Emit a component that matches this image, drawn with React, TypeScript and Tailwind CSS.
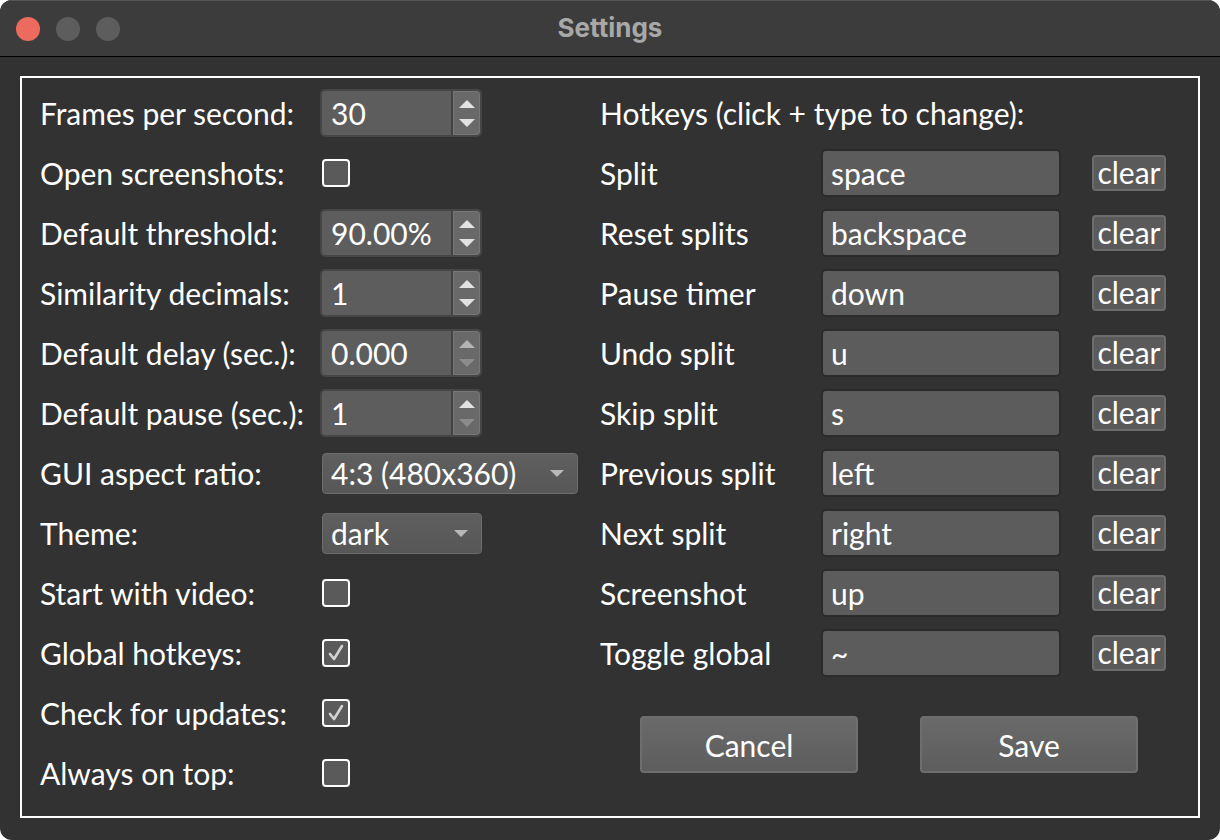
import React from 'react';

const font = "font-['Lato','Open_Sans',sans-serif]";

function Arrow({ up, dim }: { up?: boolean; dim?: 'mid' | 'low' }) {
  const color = dim === 'low' ? '#8c8c8c' : dim === 'mid' ? '#b4b4b4' : '#e2e2e2';
  return (
    <svg width="16" height="8" viewBox="0 0 16 8">
      {up ? <polygon points="8,0 16,8 0,8" fill={color} /> : <polygon points="0,0 16,0 8,8" fill={color} />}
    </svg>
  );
}

function SpinBox({ value, upDim, downDim }: { value: string; upDim?: 'mid' | 'low'; downDim?: 'mid' | 'low' }) {
  return (
    <div className="w-[162px] h-[48px] rounded-[5px] border-2 border-[#464646] bg-[#5d5d5d] flex">
      <div className="flex-1 flex items-center pl-[9px] text-white text-[30px] leading-none border-r-2 border-[#434343]">
        {value}
      </div>
      <div className="w-[27px] bg-[#696969] border border-[#767676] rounded-r-[4px] flex flex-col items-center justify-center gap-[11px]">
        <Arrow up dim={upDim} />
        <Arrow dim={downDim} />
      </div>
    </div>
  );
}

function CheckBox({ checked }: { checked?: boolean }) {
  return (
    <div className="ml-[2px] w-[28px] h-[28px] rounded-[4px] border-2 border-white bg-[#5a5a5a] flex items-center justify-center">
      {checked && (
        <svg width="20" height="20" viewBox="0 0 20 20">
          <polyline points="4,11 8,16 16,3" fill="none" stroke="#d2d2d2" strokeWidth="2.6" strokeLinecap="round" strokeLinejoin="round" />
        </svg>
      )}
    </div>
  );
}

function Combo({ value, width }: { value: string; width: string }) {
  return (
    <div className={`ml-[2px] ${width} h-[41px] rounded-[4px] border border-[#6c6c6c] bg-gradient-to-b from-[#5f5f5f] to-[#575757] flex items-center justify-between pl-[8px] pr-[13px] text-white text-[30px] leading-none`}>
      <span>{value}</span>
      <svg width="14" height="7" viewBox="0 0 14 7">
        <polygon points="0,0 14,0 7,7" fill="#b8b8b8" />
      </svg>
    </div>
  );
}

export default function App() {
  const left: { label: string; control: React.ReactNode }[] = [
    { label: 'Frames per second:', control: <SpinBox value="30" /> },
    { label: 'Open screenshots:', control: <CheckBox /> },
    { label: 'Default threshold:', control: <SpinBox value="90.00%" /> },
    { label: 'Similarity decimals:', control: <SpinBox value="1" /> },
    { label: 'Default delay (sec.):', control: <SpinBox value="0.000" upDim="mid" downDim="low" /> },
    { label: 'Default pause (sec.):', control: <SpinBox value="1" downDim="low" /> },
    { label: 'GUI aspect ratio:', control: <Combo value="4:3 (480x360)" width="w-[256px]" /> },
    { label: 'Theme:', control: <Combo value="dark" width="w-[160px]" /> },
    { label: 'Start with video:', control: <CheckBox /> },
    { label: 'Global hotkeys:', control: <CheckBox checked /> },
    { label: 'Check for updates:', control: <CheckBox checked /> },
    { label: 'Always on top:', control: <CheckBox /> },
  ];

  const hotkeys = [
    ['Split', 'space'],
    ['Reset splits', 'backspace'],
    ['Pause timer', 'down'],
    ['Undo split', 'u'],
    ['Skip split', 's'],
    ['Previous split', 'left'],
    ['Next split', 'right'],
    ['Screenshot', 'up'],
    ['Toggle global', '~'],
  ];

  return (
    <div className="w-[1220px] h-[840px] bg-white">
      <div className="w-full h-full rounded-[12px] overflow-hidden bg-[#323232] flex flex-col">
        {/* title bar */}
        <div className="h-[57px] shrink-0 bg-[#3c3c3c] border-t border-[#565656] border-b border-b-black grid grid-cols-[1fr_auto_1fr] items-center">
          <div className="flex items-center gap-[16px] pl-[16px]">
            <div className="w-[24px] h-[24px] rounded-full bg-[#ed6a5e]" />
            <div className="w-[24px] h-[24px] rounded-full bg-[#5d5d5d]" />
            <div className="w-[24px] h-[24px] rounded-full bg-[#5d5d5d]" />
          </div>
          <span className="font-['Inter','Roboto',sans-serif] font-bold text-[26px] text-[#a8a8a8] -mt-[2px]">Settings</span>
          <div />
        </div>

        {/* body */}
        <div className="flex-1 pt-[19px] px-[20px] pb-[22px]">
          <div className={`h-full border-2 border-white px-[18px] pt-[5px] flex ${font} text-white`}>
            {/* left column */}
            <div className="w-[560px] flex flex-col">
              {left.map((row) => (
                <div key={row.label} className="h-[60px] flex items-center">
                  <span className="w-[280px] text-[30px] leading-none -mt-[1px]">{row.label}</span>
                  {row.control}
                </div>
              ))}
            </div>

            {/* right column */}
            <div className="flex-1 flex flex-col">
              <div className="h-[60px] flex items-center text-[30px] leading-none">Hotkeys (click + type to change):</div>
              {hotkeys.map(([label, key]) => (
                <div key={label} className="h-[60px] flex items-center">
                  <span className="w-[221px] text-[30px] leading-none -mt-[1px]">{label}</span>
                  <div className="w-[240px] h-[48px] rounded-[5px] border-2 border-[#2b2b2b] bg-[#5c5c5c] flex items-center pl-[8px] text-[30px] leading-none">
                    {key}
                  </div>
                  <button className="ml-[31px] w-[74px] h-[36px] rounded-[4px] border-2 border-[#6c6c6c] bg-[#5a5a5a] text-white text-[30px] leading-none flex items-center justify-center pb-[3px]">
                    clear
                  </button>
                </div>
              ))}
              <div className="mt-[33px] flex">
                <button className="ml-[40px] w-[218px] h-[57px] rounded-[4px] border-2 border-[#6e6e6e] bg-gradient-to-b from-[#6a6a6a] to-[#5d5d5d] text-white text-[30px] leading-none">
                  Cancel
                </button>
                <button className="ml-[62px] w-[218px] h-[57px] rounded-[4px] border-2 border-[#6e6e6e] bg-gradient-to-b from-[#6a6a6a] to-[#5d5d5d] text-white text-[30px] leading-none">
                  Save
                </button>
              </div>
            </div>
          </div>
        </div>
      </div>
    </div>
  );
}
